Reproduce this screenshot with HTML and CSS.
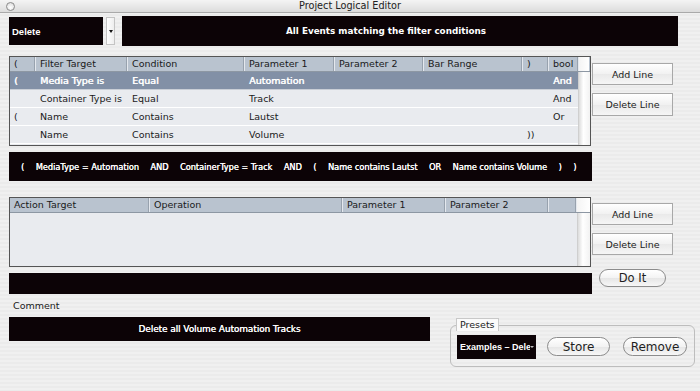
FILE: index.html
```html
<!DOCTYPE html>
<html>
<head>
<meta charset="utf-8">
<title>Project Logical Editor</title>
<link rel="stylesheet" href="styles.css">
</head>
<body>
<div class="window">
  <div class="titlebar">
    <span class="close-btn"></span>
    <span class="title">Project Logical Editor</span>
  </div>
  <div class="main">
    <div class="row-top">
      <div class="black-box mode">Delete</div>
      <div class="popup-arrow"><span class="tri"></span></div>
      <div class="black-box events">All Events matching the filter conditions</div>
    </div>

    <div class="row-table1">
      <div class="table t1">
        <div class="thead cols1h">
          <div class="th">(</div>
          <div class="th">Filter Target</div>
          <div class="th">Condition</div>
          <div class="th">Parameter 1</div>
          <div class="th">Parameter 2</div>
          <div class="th">Bar Range</div>
          <div class="th">)</div>
          <div class="th">bool</div>
          <div class="th filler"></div>
        </div>
        <div class="tbody">
          <div class="rows">
            <div class="tr cols1 selected">
              <div class="td">(</div><div class="td">Media Type is</div><div class="td">Equal</div><div class="td">Automation</div><div class="td"></div><div class="td"></div><div class="td"></div><div class="td">And</div>
            </div>
            <div class="tr cols1">
              <div class="td"></div><div class="td">Container Type is</div><div class="td">Equal</div><div class="td">Track</div><div class="td"></div><div class="td"></div><div class="td"></div><div class="td">And</div>
            </div>
            <div class="tr cols1">
              <div class="td">(</div><div class="td">Name</div><div class="td">Contains</div><div class="td">Lautst</div><div class="td"></div><div class="td"></div><div class="td"></div><div class="td">Or</div>
            </div>
            <div class="tr cols1">
              <div class="td"></div><div class="td">Name</div><div class="td">Contains</div><div class="td">Volume</div><div class="td"></div><div class="td"></div><div class="td">))</div><div class="td"></div>
            </div>
          </div>
          <div class="track"></div>
        </div>
      </div>
      <div class="side-buttons s1">
        <div class="btn">Add Line</div>
        <div class="btn">Delete Line</div>
      </div>
    </div>

    <div class="black-box formula">
      <span>(</span><span>MediaType = Automation</span><span>AND</span><span>ContainerType = Track</span><span>AND</span><span>(</span><span>Name contains Lautst</span><span>OR</span><span>Name contains Volume</span><span>)</span><span>)</span>
    </div>

    <div class="row-table2">
      <div class="table t2">
        <div class="thead cols2h">
          <div class="th">Action Target</div>
          <div class="th">Operation</div>
          <div class="th">Parameter 1</div>
          <div class="th">Parameter 2</div>
          <div class="th"></div>
          <div class="th filler"></div>
        </div>
        <div class="tbody">
          <div class="rows empty"></div>
          <div class="track"></div>
        </div>
      </div>
      <div class="side-buttons s2">
        <div class="btn">Add Line</div>
        <div class="btn">Delete Line</div>
      </div>
    </div>

    <div class="row-doit">
      <div class="black-box status"></div>
      <div class="pill doit">Do It</div>
    </div>

    <div class="comment-label">Comment</div>

    <div class="row-bottom">
      <div class="black-box comment">Delete all Volume Automation Tracks</div>
      <div class="presets">
        <div class="legend">Presets</div>
        <div class="black-box preset-select"><span class="preset-text">Examples – Dele</span><span class="mini-tri"></span></div>
        <div class="pill store">Store</div>
        <div class="pill remove">Remove</div>
      </div>
    </div>
  </div>
</div>
</body>
</html>
```

FILE: styles.css
```css
* { box-sizing: border-box; }
html, body { margin: 0; padding: 0; }
body {
  font-family: "DejaVu Sans", "Liberation Sans", sans-serif;
  font-size: 9.5px;
  color: #1a1a1a;
}
.window {
  width: 700px;
  height: 391px;
  overflow: hidden;
  background: repeating-linear-gradient(180deg, #f0f0f0 0 2px, #ebebeb 2px 4px);
}
.titlebar {
  height: 13px;
  position: relative;
  background: linear-gradient(#f4f4f4, #dcdcdc);
  border-bottom: 1px solid #a9a9a9;
  display: flex;
  justify-content: center;
  align-items: center;
}
.close-btn {
  position: absolute;
  left: 6px;
  top: 2px;
  width: 9px;
  height: 9px;
  border-radius: 50%;
  border: 1px solid #8a8a8a;
  background: radial-gradient(circle at 50% 65%, #ffffff, #d8d8d8);
}
.title {
  font-size: 9.7px;
  color: #222;
  line-height: 12px;
}
.main {
  padding-left: 9px;
}
.black-box {
  background: #0c0306;
  color: #fff;
}
.row-top {
  margin-top: 3px;
  height: 30px;
  display: flex;
  align-items: center;
}
.mode {
  width: 94px;
  height: 28px;
  display: flex;
  align-items: center;
  padding-left: 3px;
  font-family: "Liberation Sans", sans-serif;
  font-weight: bold;
  font-size: 9.5px;
}
.popup-arrow {
  width: 9px;
  height: 28px;
  margin-left: 3px;
  background: linear-gradient(90deg, #ffffff, #eeeeee);
  border: 1px solid #c4c4c4;
  display: flex;
  align-items: center;
  justify-content: center;
}
.tri {
  width: 0;
  height: 0;
  border-left: 2.5px solid transparent;
  border-right: 2.5px solid transparent;
  border-top: 3px solid #111;
}
.events {
  width: 556px;
  height: 30px;
  margin-left: 7px;
  display: flex;
  align-items: center;
  justify-content: center;
  padding-right: 28px;
  font-weight: bold;
  font-size: 8.8px;
}

/* tables */
.row-table1 {
  margin-top: 10px;
  display: flex;
  align-items: flex-start;
}
.table {
  width: 582px;
  border: 1px solid #555;
  background: #e9ebef;
  display: flex;
  flex-direction: column;
  overflow: hidden;
}
.t1 { height: 90px; }
.t2 { height: 70px; }
.thead {
  display: grid;
  height: 15px;
  background: #b9c3cf;
  border-bottom: 1px solid #8d97a3;
}
.cols1h { grid-template-columns: 26px 92px 117px 90px 89px 99px 26px 30px 10px; }
.cols1 { grid-template-columns: 26px 92px 117px 90px 89px 99px 26px 29px; }
.cols2h { grid-template-columns: 140px 193px 103px 103px 28px 13px; }
.th {
  border-right: 1px solid #e4e8ee;
  box-shadow: inset -1px 0 0 #98a2ae;
  padding-left: 4px;
  line-height: 14px;
  white-space: nowrap;
  overflow: hidden;
}
.th.filler {
  background: linear-gradient(90deg, #f4f4f4, #ffffff);
  border-right: none;
  box-shadow: none;
}
.tbody {
  flex: 1;
  display: flex;
}
.rows {
  flex: 1;
}
.tr {
  display: grid;
  height: 18px;
  border-bottom: 1px solid #ffffff;
}
.td {
  padding-left: 4px;
  line-height: 17px;
  white-space: nowrap;
  overflow: hidden;
}
.tr.selected {
  background: #8290a6;
  color: #fff;
  text-shadow: 0.5px 0 0 #fff;
  border-bottom-color: #c9ced6;
}
.track {
  width: 12px;
  background: linear-gradient(90deg, #dcdcdc, #ffffff 40%, #f2f2f2);
  border-left: 1px solid #cfcfcf;
}
.t2 .track { width: 13px; }

.side-buttons {
  margin-left: 1px;
  display: flex;
  flex-direction: column;
  gap: 8px;
}
.s1 { margin-top: 7px; }
.s2 { margin-top: 6px; }
.btn {
  width: 81px;
  height: 22px;
  border: 1px solid #a8a8a8;
  background: linear-gradient(#ffffff, #f1f1f1 50%, #e9e9e9 51%, #f6f6f6);
  display: flex;
  align-items: center;
  justify-content: center;
  color: #222;
}
.s1 .btn:nth-child(2) { height: 23px; }

.formula {
  margin-top: 6px;
  width: 583px;
  height: 29px;
  display: flex;
  align-items: center;
  gap: 11.5px;
  padding-left: 12px;
  white-space: nowrap;
  font-size: 8.2px;
  text-shadow: 0.3px 0 0 #fff;
}

.row-table2 {
  margin-top: 16px;
  display: flex;
  align-items: flex-start;
}

.row-doit {
  margin-top: 2px;
  display: flex;
  align-items: flex-start;
}
.status {
  margin-top: 4px;
  width: 583px;
  height: 21px;
}
.pill {
  border: 1px solid #8c8c8c;
  border-radius: 10px;
  background: linear-gradient(#ffffff, #f3f3f3 50%, #e6e6e6 52%, #f7f7f7);
  display: flex;
  align-items: center;
  justify-content: center;
  font-size: 12px;
  color: #1e1e1e;
}
.doit {
  margin-left: 7px;
  width: 67px;
  height: 18px;
  font-size: 11.5px;
}

.comment-label {
  margin-top: 6px;
  padding-left: 4px;
  line-height: 12px;
  height: 12px;
}

.row-bottom {
  margin-top: 5px;
  display: flex;
  align-items: flex-start;
}
.comment {
  width: 421px;
  height: 24px;
  display: flex;
  align-items: center;
  justify-content: center;
  font-size: 8.8px;
  text-shadow: 0.3px 0 0 #fff;
}
.presets {
  position: relative;
  margin-top: 8px;
  margin-left: 20px;
  width: 245px;
  height: 42px;
  border: 1px solid #bdbdbd;
  border-radius: 6px;
  display: flex;
  align-items: center;
  padding-left: 6px;
  padding-top: 1px;
}
.legend {
  position: absolute;
  left: 5px;
  top: -8px;
  height: 13px;
  padding: 0 3px;
  background: #fafafa;
  border: 1px solid #c8c8c8;
  border-bottom: none;
  line-height: 12px;
  color: #222;
}
.preset-select {
  width: 79px;
  height: 24px;
  display: flex;
  align-items: center;
  padding-left: 3px;
  font-family: "Liberation Sans", sans-serif;
  font-weight: bold;
  font-size: 9px;
  white-space: nowrap;
  overflow: hidden;
}
.preset-text {
  width: 70px;
  overflow: hidden;
  flex: none;
}
.mini-tri {
  flex: none;
  margin-left: 0;
  margin-top: 1px;
  width: 0;
  height: 0;
  border-left: 2px solid transparent;
  border-right: 2px solid transparent;
  border-top: 2.5px solid #bbb;
}
.store {
  margin-left: 11px;
  width: 63px;
  height: 19px;
}
.remove {
  margin-left: 13px;
  width: 64px;
  height: 19px;
}
```
